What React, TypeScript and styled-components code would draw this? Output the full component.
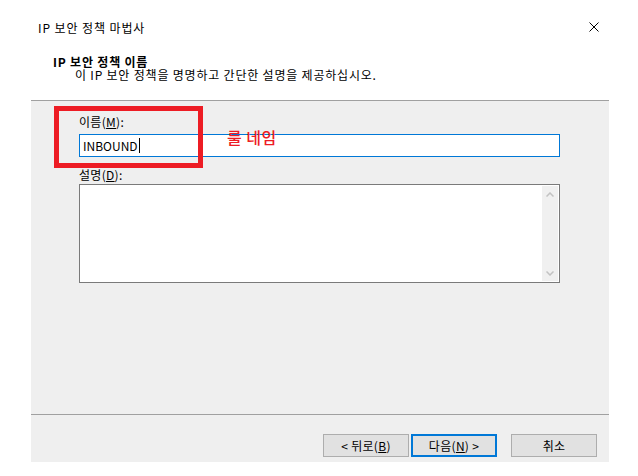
import React from "react";
import styled, { createGlobalStyle } from "styled-components";

const Global = createGlobalStyle`
  html, body { margin: 0; padding: 0; background: #ffffff; }
  body {
    font-family: "Noto Sans CJK KR", "Noto Sans", sans-serif;
    font-size: 12px;
    color: #000;
  }
`;

const Window = styled.div`
  width: 638px;
  height: 476px;
  display: flex;
  flex-direction: column;
  background: #fff;
  overflow: hidden;
`;

const TitleBar = styled.div`
  height: 54px;
  display: flex;
  align-items: center;
  justify-content: space-between;
  padding: 0 39px 0 38px;
  box-sizing: border-box;
  font-size: 12px;
  letter-spacing: 0.9px;
`;

const CloseBtn = styled.svg`
  width: 10px;
  height: 10px;
  display: block;
`;

const Header = styled.div`
  height: 46px;
  padding-left: 53px;
  box-sizing: border-box;
  display: flex;
  flex-direction: column;
  line-height: 13px;
  padding-top: 1px;
  letter-spacing: 0.8px;
`;

const HeaderTitle = styled.div`
  font-weight: 700;
`;

const HeaderSub = styled.div`
  padding-left: 22px;
`;

const Panel = styled.div`
  position: relative;
  margin: 0 29px 14px 31px;
  flex: 1;
  background: #efefef;
  border-top: 1px solid #a0a0a0;
  display: flex;
  flex-direction: column;
`;

const Body = styled.div`
  flex: 1;
  padding: 14px 49px 0 48px;
  display: flex;
  flex-direction: column;
`;

const Label = styled.div<{ $gap?: number }>`
  line-height: 14px;
  letter-spacing: 0.3px;
  margin-top: ${(p) => p.$gap ?? 0}px;
`;

const Key = styled.span`
  text-decoration: underline;
  text-underline-offset: 1px;
`;

const Input = styled.div`
  margin-top: 5px;
  height: 23px;
  box-sizing: border-box;
  border: 1px solid #0078d7;
  background: #fff;
  display: flex;
  align-items: center;
  padding-left: 3px;
  font-size: 12px;
`;

const Caret = styled.span`
  display: inline-block;
  width: 1px;
  height: 15px;
  background: #000;
  margin-left: 1px;
`;

const TextBox = styled.div`
  margin-top: 2px;
  height: 99px;
  box-sizing: border-box;
  border: 1px solid #7a7a7a;
  background: #fff;
  display: flex;
  justify-content: flex-end;
  padding: 1px;
`;

const ScrollTrack = styled.div`
  width: 16px;
  background: #f0f0f0;
  display: flex;
  flex-direction: column;
  justify-content: space-between;
  align-items: center;
  padding: 6px 0 5px;
  box-sizing: border-box;
`;

const Chevron = styled.svg`
  width: 8px;
  height: 5px;
  display: block;
`;

const Footer = styled.div`
  height: 48px;
  border-top: 1px solid #a0a0a0;
  display: flex;
  justify-content: flex-end;
  align-items: flex-start;
  padding: 19px 12px 0 0;
  box-sizing: border-box;
`;

const Button = styled.div<{ $primary?: boolean; $gap?: number }>`
  width: 86px;
  height: 23px;
  box-sizing: border-box;
  margin-left: ${(p) => p.$gap ?? 0}px;
  background: #e1e1e1;
  border: ${(p) => (p.$primary ? "2px solid #0078d7" : "1px solid #adadad")};
  display: flex;
  align-items: center;
  justify-content: center;
  font-size: 12px;
  letter-spacing: 0.3px;
  white-space: pre;
`;

const Annotation = styled.div`
  position: absolute;
  left: 23px;
  top: 5px;
  width: 149px;
  height: 62px;
  box-sizing: border-box;
  border: 5px solid #ed1c24;
  pointer-events: none;
`;

const AnnotationText = styled.div`
  position: absolute;
  left: 196px;
  top: 27px;
  color: #ed1c24;
  font-size: 16px;
  font-weight: 500;
  line-height: 19px;
  letter-spacing: 0.5px;
`;

export default function App() {
  return (
    <>
      <Global />
      <Window>
        <TitleBar>
          <span>IP 보안 정책 마법사</span>
          <CloseBtn viewBox="0 0 10 10">
            <path d="M0.5 0.5 L9.5 9.5 M9.5 0.5 L0.5 9.5" stroke="#000" strokeWidth="1" />
          </CloseBtn>
        </TitleBar>
        <Header>
          <HeaderTitle>IP 보안 정책 이름</HeaderTitle>
          <HeaderSub>이 IP 보안 정책을 명명하고 간단한 설명을 제공하십시오.</HeaderSub>
        </Header>
        <Panel>
          <Body>
            <Label>
              이름(<Key>M</Key>):
            </Label>
            <Input>
              INBOUND
              <Caret />
            </Input>
            <Label $gap={11}>
              설명(<Key>D</Key>):
            </Label>
            <TextBox>
              <ScrollTrack>
                <Chevron viewBox="0 0 8 5">
                  <path d="M0.5 4.5 L4 1 L7.5 4.5" fill="none" stroke="#c2c2c2" strokeWidth="1.5" />
                </Chevron>
                <Chevron viewBox="0 0 8 5">
                  <path d="M0.5 0.5 L4 4 L7.5 0.5" fill="none" stroke="#c2c2c2" strokeWidth="1.5" />
                </Chevron>
              </ScrollTrack>
            </TextBox>
          </Body>
          <Footer>
            <Button>
              {"< 뒤로("}
              <Key>B</Key>
              {")"}
            </Button>
            <Button $primary $gap={2}>
              {"다음("}
              <Key>N</Key>
              {") >"}
            </Button>
            <Button $gap={14}>취소</Button>
          </Footer>
          <Annotation />
          <AnnotationText>룰 네임</AnnotationText>
        </Panel>
      </Window>
    </>
  );
}
